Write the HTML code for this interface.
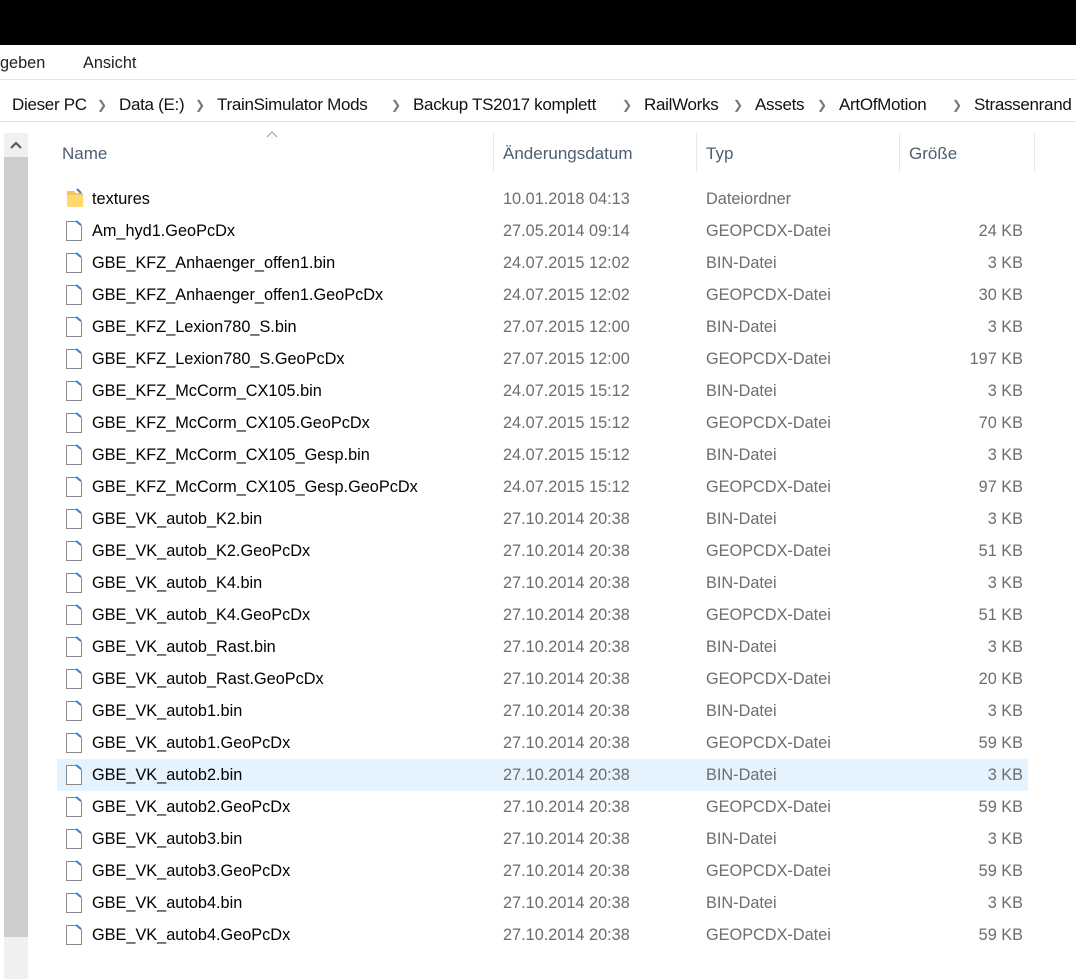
<!DOCTYPE html>
<html><head><meta charset="utf-8"><style>
*{margin:0;padding:0;box-sizing:border-box}
body{width:1076px;height:979px;overflow:hidden;background:#fff;font-family:"Liberation Sans",sans-serif;font-size:16.3px;position:relative;color:#000}
.a{position:absolute;white-space:nowrap}
.top{left:0;top:0;width:1076px;height:45px;background:#000}
.hl{height:1px;background:#e3e3e3;left:0;width:1076px}
.crumb{top:95px;color:#111;font-size:17px}
.chev{color:#777;font-size:12px;top:98px}
.hdr{top:144px;color:#4d5d72;font-size:17px}
.sep{top:133px;width:1px;height:39px;background:#e8e8e8}
.row{left:57px;width:971px;height:32px}
.row span{position:absolute;top:7px}
.n{left:35px}
.d{left:446px;color:#6d6d6d}
.t{left:649px;color:#6d6d6d}
.s{right:5px;color:#6d6d6d}
.ic{position:absolute;left:8px;top:5px}
</style></head><body>
<div class="a top"></div>
<div class="a" style="left:0;top:54px;color:#222">geben</div>
<div class="a" style="left:83px;top:54px;color:#222">Ansicht</div>
<div class="a hl" style="top:79px"></div>
<div class="a hl" style="top:121px"></div>
<div class="a crumb" style="left:12px;letter-spacing:-0.3px">Dieser PC</div><div class="a chev" style="left:97px">&#10095;</div>
<div class="a crumb" style="left:119px;letter-spacing:-0.3px">Data (E:)</div><div class="a chev" style="left:195px">&#10095;</div>
<div class="a crumb" style="left:217px;letter-spacing:-0.3px">TrainSimulator Mods</div><div class="a chev" style="left:391px">&#10095;</div>
<div class="a crumb" style="left:413px;letter-spacing:-0.3px">Backup TS2017 komplett</div><div class="a chev" style="left:622px">&#10095;</div>
<div class="a crumb" style="left:644px;letter-spacing:-0.3px">RailWorks</div><div class="a chev" style="left:733px">&#10095;</div>
<div class="a crumb" style="left:755px;letter-spacing:-0.3px">Assets</div><div class="a chev" style="left:817px">&#10095;</div>
<div class="a crumb" style="left:839px;letter-spacing:-0.3px">ArtOfMotion</div><div class="a chev" style="left:952px">&#10095;</div>
<div class="a crumb" style="left:974px;letter-spacing:-0.3px">Strassenrand</div>
<div class="a" style="left:4px;top:133px;width:24px;height:846px;background:#f0f0f0"></div>
<div class="a" style="left:4px;top:157px;width:24px;height:780px;background:#cdcdcd"></div>
<svg class="a" style="left:9px;top:140px" width="14" height="10"><path d="M2 8 L7 3 L12 8" stroke="#555" stroke-width="2" fill="none"/></svg>
<svg class="a" style="left:266px;top:131px" width="12" height="8"><path d="M1 6 L6 1 L11 6" stroke="#999" stroke-width="1" fill="none"/></svg>
<div class="a hdr" style="left:62px">Name</div>
<div class="a sep" style="left:493px"></div>
<div class="a hdr" style="left:503px">Änderungsdatum</div>
<div class="a sep" style="left:696px"></div>
<div class="a hdr" style="left:706px">Typ</div>
<div class="a sep" style="left:899px"></div>
<div class="a hdr" style="left:909px">Größe</div>
<div class="a sep" style="left:1034px"></div>
<div id="rows"></div>
<script>
var R=[["textures","10.01.2018 04:13","Dateiordner",""],
["Am_hyd1.GeoPcDx","27.05.2014 09:14","GEOPCDX-Datei","24 KB"],
["GBE_KFZ_Anhaenger_offen1.bin","24.07.2015 12:02","BIN-Datei","3 KB"],
["GBE_KFZ_Anhaenger_offen1.GeoPcDx","24.07.2015 12:02","GEOPCDX-Datei","30 KB"],
["GBE_KFZ_Lexion780_S.bin","27.07.2015 12:00","BIN-Datei","3 KB"],
["GBE_KFZ_Lexion780_S.GeoPcDx","27.07.2015 12:00","GEOPCDX-Datei","197 KB"],
["GBE_KFZ_McCorm_CX105.bin","24.07.2015 15:12","BIN-Datei","3 KB"],
["GBE_KFZ_McCorm_CX105.GeoPcDx","24.07.2015 15:12","GEOPCDX-Datei","70 KB"],
["GBE_KFZ_McCorm_CX105_Gesp.bin","24.07.2015 15:12","BIN-Datei","3 KB"],
["GBE_KFZ_McCorm_CX105_Gesp.GeoPcDx","24.07.2015 15:12","GEOPCDX-Datei","97 KB"],
["GBE_VK_autob_K2.bin","27.10.2014 20:38","BIN-Datei","3 KB"],
["GBE_VK_autob_K2.GeoPcDx","27.10.2014 20:38","GEOPCDX-Datei","51 KB"],
["GBE_VK_autob_K4.bin","27.10.2014 20:38","BIN-Datei","3 KB"],
["GBE_VK_autob_K4.GeoPcDx","27.10.2014 20:38","GEOPCDX-Datei","51 KB"],
["GBE_VK_autob_Rast.bin","27.10.2014 20:38","BIN-Datei","3 KB"],
["GBE_VK_autob_Rast.GeoPcDx","27.10.2014 20:38","GEOPCDX-Datei","20 KB"],
["GBE_VK_autob1.bin","27.10.2014 20:38","BIN-Datei","3 KB"],
["GBE_VK_autob1.GeoPcDx","27.10.2014 20:38","GEOPCDX-Datei","59 KB"],
["GBE_VK_autob2.bin","27.10.2014 20:38","BIN-Datei","3 KB"],
["GBE_VK_autob2.GeoPcDx","27.10.2014 20:38","GEOPCDX-Datei","59 KB"],
["GBE_VK_autob3.bin","27.10.2014 20:38","BIN-Datei","3 KB"],
["GBE_VK_autob3.GeoPcDx","27.10.2014 20:38","GEOPCDX-Datei","59 KB"],
["GBE_VK_autob4.bin","27.10.2014 20:38","BIN-Datei","3 KB"],
["GBE_VK_autob4.GeoPcDx","27.10.2014 20:38","GEOPCDX-Datei","59 KB"]];
var file='<svg class="ic" width="18" height="22"><path d="M1.5 1.5 H12 L16.5 6 V20.5 H1.5 Z" fill="#fff" stroke="#8a8a8a"/><path d="M11 1 L16 5" stroke="#3b7fc4" stroke-width="2"/></svg>';
var fold='<svg class="ic" width="20" height="22"><path d="M2 3 H9 L11 5 H18 V19 H2 Z" fill="#f0c75e"/><path d="M2 7 H18 V19 H2 Z" fill="#ffd86e"/><path d="M12 1 L16 5" stroke="#3b7fc4" stroke-width="2"/></svg>';
var h='';R.forEach(function(r,i){var y=183+i*32;
h+='<div class="a row" style="top:'+y+'px;'+(i==18?'background:#e5f3ff':'')+'">'+(i==0?fold:file)+'<span class="n">'+r[0]+'</span><span class="d">'+r[1]+'</span><span class="t">'+r[2]+'</span><span class="s">'+r[3]+'</span></div>';});
document.getElementById('rows').innerHTML=h;
</script>
</body></html>
